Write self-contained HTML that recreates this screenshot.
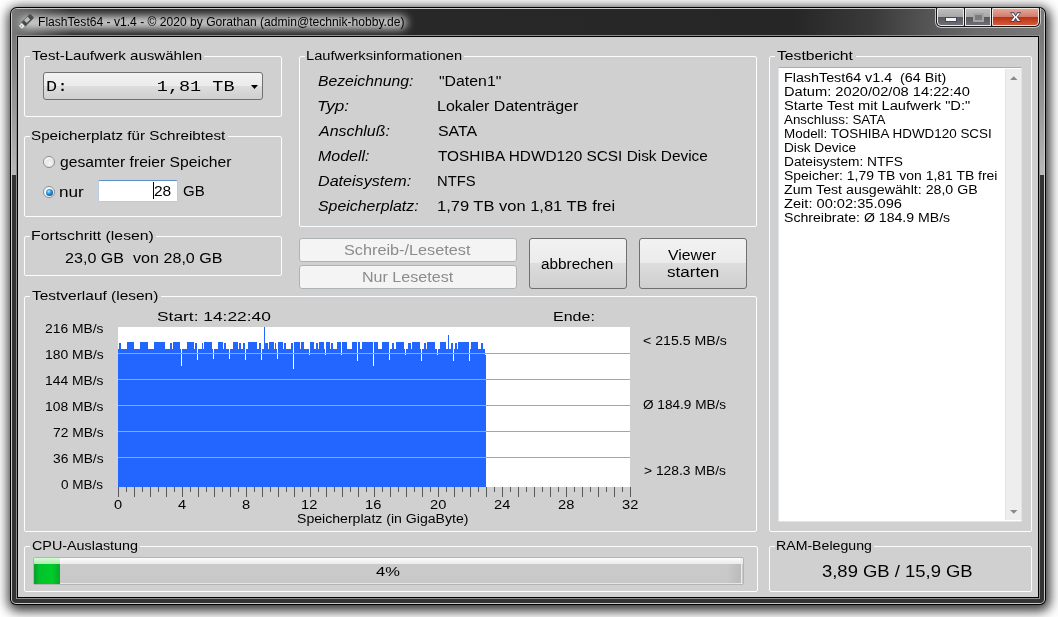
<!DOCTYPE html>
<html><head><meta charset="utf-8"><style>
html,body{margin:0;padding:0}
body{width:1058px;height:617px;position:relative;overflow:hidden;background:#fff;font-family:'Liberation Sans',sans-serif}
.t{position:absolute;line-height:20px;white-space:pre;transform-origin:0 0}
.a{position:absolute;box-sizing:border-box}
.gb{position:absolute;border:1px solid #fbfdff;border-radius:2px}
.gap{position:absolute;height:3px;background:#d0d0d0}
</style></head><body>
<div class="a" style="left:10px;top:7px;width:1036px;height:598px;border-radius:7px 7px 6px 6px;background:#000;box-shadow:1px 3px 12px 3px rgba(0,0,0,.8)"></div>
<div class="a" style="left:11px;top:8px;width:1034px;height:596px;border-radius:6px 6px 5px 5px;background:#c8c8c8"></div>
<div class="a" style="left:12px;top:9px;width:1032px;height:594px;border-radius:5px 5px 4px 4px;background:#333;overflow:hidden">
  <div class="a" style="left:0;top:0;width:1032px;height:26px;background:linear-gradient(to right,#7a7a7a 0px,#5a5a5a 22px,#2a2a2a 60px,#262626 780px,#3a3a3a 860px,#6a6a6a 960px,#7a7a7a 1032px)"></div>
  <div class="a" style="left:8px;top:7px;width:387px;height:13px;border-radius:7px;background:#d0d0d0;filter:blur(4px)"></div>
  <div class="a" style="left:0;top:26px;width:4px;height:140px;background:linear-gradient(#787878,#b8b8b8)"></div>
  <div class="a" style="left:1028px;top:26px;width:4px;height:140px;background:linear-gradient(#787878,#b8b8b8)"></div>
</div>
<div class="a" style="left:16px;top:35px;width:1024px;height:564px;border:1px solid #8c8c8c;background:#000"></div>
<div class="a" style="left:18px;top:37px;width:1020px;height:560px;background:#d0d0d0"></div>
<svg class="a" style="left:0;top:0" width="1058" height="40" viewBox="0 0 1058 40">
  <g transform="translate(26.8 21) rotate(-45)">
    <rect x="-5" y="-2.9" width="12.5" height="5.8" rx="0.8" fill="#474b4e"/>
    <rect x="-5" y="-2.9" width="12.5" height="1" fill="#5e6266"/>
    <rect x="-1.5" y="-2.5" width="5" height="4" fill="#bdbdbd"/>
    <rect x="-9" y="-2.1" width="4" height="4.2" fill="#ececec"/>
    <rect x="-8" y="-0.8" width="1.3" height="1.3" fill="#888"/>
  </g>
</svg>
<!-- caption buttons -->
<div class="a" style="left:935px;top:8px;width:106px;height:20px;border-radius:0 0 6px 6px;background:#c4c4c4"></div>
<div class="a" style="left:936px;top:7px;width:104px;height:20px;border-radius:0 0 5px 5px;background:#151515"></div>
<div class="a" style="left:937px;top:8px;width:27px;height:18px;border-radius:0 0 0 4px;border:1px solid #ececec;background:linear-gradient(#bebebe,#a6a6a6 50%,#5a5a5a 50%,#6c6d78)"></div>
<div class="a" style="left:965px;top:8px;width:26px;height:18px;border:1px solid #ececec;background:linear-gradient(#bebebe,#a6a6a6 50%,#5a5a5a 50%,#6c6d78)"></div>
<div class="a" style="left:992px;top:8px;width:47px;height:18px;border-radius:0 0 4px 0;border:1px solid #f2e6e2;background:linear-gradient(#e4a696,#d27c6a 50%,#bc2e14 50%,#d05a3a)"></div>
<div class="a" style="left:945px;top:17px;width:12px;height:5px;background:#f4f4f4;border:1px solid #3c4870"></div>
<div class="a" style="left:973px;top:13px;width:11px;height:9px;border:2px solid #a4a4a4;background:#7c7c7c"></div>
<svg class="a" style="left:1006px;top:9px" width="20" height="16" viewBox="0 0 20 16">
  <g transform="translate(9.6 8.1)">
  <path d="M-5.6 -4.8H-1.6L0 -2.1L1.6 -4.8H5.6L2.3 0L5.6 4.8H1.6L0 2.1L-1.6 4.8H-5.6L-2.3 0Z" fill="#3a4060"/>
  <path d="M-4.5 -3.8H-2.1L0 -0.7L2.1 -3.8H4.5L1.3 0L4.5 3.8H2.1L0 0.7L-2.1 3.8H-4.5L-1.3 0Z" fill="#fafafa"/>
  </g>
</svg>
<div class="gb" style="left:24px;top:56px;width:256px;height:59px"></div><div class="gap" style="left:30px;top:55px;width:174px"></div><div class="gb" style="left:24px;top:136px;width:256px;height:79px"></div><div class="gap" style="left:30px;top:135px;width:198px"></div><div class="gb" style="left:24px;top:236px;width:256px;height:38px"></div><div class="gap" style="left:30px;top:235px;width:126px"></div><div class="gb" style="left:299px;top:56px;width:456px;height:169px"></div><div class="gap" style="left:305px;top:55px;width:159px"></div><div class="gb" style="left:24px;top:296px;width:731px;height:234px"></div><div class="gap" style="left:30px;top:295px;width:131px"></div><div class="gb" style="left:24px;top:546px;width:732px;height:44px"></div><div class="gap" style="left:30px;top:545px;width:110px"></div><div class="gb" style="left:769px;top:56px;width:261px;height:474px"></div><div class="gap" style="left:775px;top:55px;width:81px"></div><div class="gb" style="left:769px;top:546px;width:261px;height:44px"></div><div class="gap" style="left:775px;top:545px;width:99px"></div>
<!-- combo -->
<div class="a" style="left:43px;top:72px;width:220px;height:28px;border:1px solid #707070;border-radius:3px;background:linear-gradient(#f2f2f2,#ebebeb 50%,#dddddd 50%,#cfcfcf)"></div>
<svg class="a" style="left:250px;top:84px" width="9" height="6"><path d="M1 1H8L4.5 5Z" fill="#000"/></svg>
<!-- radios -->
<div class="a" style="left:43px;top:156px;width:12px;height:12px;border-radius:50%;border:1px solid #8c8c8c;background:radial-gradient(circle at 60% 65%,#f6f6f6 0,#e4e6e8 45%,#ffffff 75%)"></div>
<div class="a" style="left:43px;top:186px;width:12px;height:12px;border-radius:50%;border:1px solid #8c8c8c;background:#f8f8f8"></div>
<div class="a" style="left:45.5px;top:188.5px;width:7px;height:7px;border-radius:50%;background:radial-gradient(circle at 40% 35%,#b8f0ff 0,#3aa6ea 30%,#1a78c8 55%,#0e3658 90%)"></div>
<!-- text field -->
<div class="a" style="left:98px;top:180px;width:80px;height:22px;border:1px solid #b5cde6;border-top-color:#5e8fc4;border-radius:2px;background:#fff"></div>
<div class="a" style="left:153px;top:182px;width:1px;height:17px;background:#000"></div>
<!-- buttons -->
<div class="a" style="left:299px;top:238px;width:218px;height:24px;border:1px solid #adb2b5;border-radius:3px;background:#f4f4f4"></div>
<div class="a" style="left:299px;top:265px;width:218px;height:24px;border:1px solid #adb2b5;border-radius:3px;background:#f4f4f4"></div>
<div class="a" style="left:529px;top:238px;width:98px;height:51px;border:1px solid #707070;border-radius:3px;background:linear-gradient(#f2f2f2,#ebebeb 50%,#dddddd 50%,#cfcfcf)"></div>
<div class="a" style="left:639px;top:238px;width:108px;height:51px;border:1px solid #707070;border-radius:3px;background:linear-gradient(#f2f2f2,#ebebeb 50%,#dddddd 50%,#cfcfcf)"></div>
<!-- chart -->
<svg class="a" style="left:0;top:0" width="1058" height="617" viewBox="0 0 1058 617">
  <rect x="118" y="327" width="512" height="160" fill="#fff"/>
  <path d="M118 349H119V487H118ZM119 343H121V487H119ZM121 349H127V487H121ZM127 342H134V487H127ZM134 349H140V487H134ZM140 342H148V487H140ZM148 349H154V487H148ZM154 342H165V487H154ZM165 349H170V487H165ZM170 343H172V487H170ZM172 349H173V487H172ZM173 342H180V487H173ZM180 349H181V487H180ZM181 366H182V487H181ZM182 349H187V487H182ZM187 342H194V487H187ZM194 349H195V487H194ZM195 343H197V487H195ZM197 360H198V487H197ZM198 349H202V487H198ZM202 343H203V487H202ZM203 349H204V487H203ZM204 342H212V487H204ZM212 349H213V487H212ZM213 359H214V487H213ZM214 349H218V487H214ZM218 342H223V487H218ZM223 349H224V487H223ZM224 343H226V487H224ZM226 349H229V487H226ZM229 359H230V487H229ZM230 349H233V487H230ZM233 342H238V487H233ZM238 349H239V487H238ZM239 343H241V487H239ZM241 349H243V487H241ZM243 343H245V487H243ZM245 360H246V487H245ZM246 349H248V487H246ZM248 342H257V487H248ZM257 349H259V487H257ZM259 343H261V487H259ZM261 360H262V487H261ZM262 349H264V487H262ZM264 327H265V487H264ZM265 343H268V487H265ZM268 349H269V487H268ZM269 342H274V487H269ZM274 349H275V487H274ZM275 343H276V487H275ZM276 349H277V487H276ZM277 359H278V487H277ZM278 342H283V487H278ZM283 349H284V487H283ZM284 343H286V487H284ZM286 349H291V487H286ZM291 343H293V487H291ZM293 369H294V487H293ZM294 342H300V487H294ZM300 349H301V487H300ZM301 342H304V487H301ZM304 349H309V487H304ZM309 355H310V487H309ZM310 342H314V487H310ZM314 349H316V487H314ZM316 343H318V487H316ZM318 349H319V487H318ZM319 342H324V487H319ZM324 349H325V487H324ZM325 355H326V487H325ZM326 342H330V487H326ZM330 349H331V487H330ZM331 343H333V487H331ZM333 349H337V487H333ZM337 342H341V487H337ZM341 355H342V487H341ZM342 342H347V487H342ZM347 349H352V487H347ZM352 342H357V487H352ZM357 361H358V487H357ZM358 342H360V487H358ZM360 349H362V487H360ZM362 342H373V487H362ZM373 366H374V487H373ZM374 342H378V487H374ZM378 349H382V487H378ZM382 342H389V487H382ZM389 360H390V487H389ZM390 349H392V487H390ZM392 343H394V487H392ZM394 349H396V487H394ZM396 342H404V487H396ZM404 349H405V487H404ZM405 355H406V487H405ZM406 349H408V487H406ZM408 343H411V487H408ZM411 349H412V487H411ZM412 342H420V487H412ZM420 349H421V487H420ZM421 361H422V487H421ZM422 349H424V487H422ZM424 343H426V487H424ZM426 349H427V487H426ZM427 342H435V487H427ZM435 349H437V487H435ZM437 355H438V487H437ZM438 349H440V487H438ZM440 342H446V487H440ZM446 349H448V487H446ZM448 335H449V487H448ZM449 349H451V487H449ZM451 343H453V487H451ZM453 361H454V487H453ZM454 349H455V487H454ZM455 343H457V487H455ZM457 349H458V487H457ZM458 342H469V487H458ZM469 361H470V487H469ZM470 349H471V487H470ZM471 342H478V487H471ZM478 349H481V487H478ZM481 343H483V487H481ZM483 349H485V487H483ZM485 355H486V487H485Z" fill="#2266ff"/>
  <path d="M118 353.5H630M118 379.5H630M118 405.5H630M118 431.5H630M118 457.5H630" stroke="#a6a6a6" stroke-width="1"/>
  <path d="M118.5 487V497M126.5 487V492M134.5 487V497M142.5 487V492M150.5 487V497M158.5 487V492M166.5 487V497M174.5 487V492M182.5 487V497M190.5 487V492M198.5 487V497M206.5 487V492M214.5 487V497M222.5 487V492M230.5 487V497M238.5 487V492M246.5 487V497M254.5 487V492M262.5 487V497M270.5 487V492M278.5 487V497M286.5 487V492M294.5 487V497M302.5 487V492M310.5 487V497M318.5 487V492M326.5 487V497M334.5 487V492M342.5 487V497M350.5 487V492M358.5 487V497M366.5 487V492M374.5 487V497M382.5 487V492M390.5 487V497M398.5 487V492M406.5 487V497M414.5 487V492M422.5 487V497M430.5 487V492M438.5 487V497M446.5 487V492M454.5 487V497M462.5 487V492M470.5 487V497M478.5 487V492M486.5 487V497M494.5 487V492M502.5 487V497M510.5 487V492M518.5 487V497M526.5 487V492M534.5 487V497M542.5 487V492M550.5 487V497M558.5 487V492M566.5 487V497M574.5 487V492M582.5 487V497M590.5 487V492M598.5 487V497M606.5 487V492M614.5 487V497M622.5 487V492M630.5 487V497" stroke="#5a5a5a" stroke-width="1"/>
</svg>
<!-- progress -->
<div class="a" style="left:33px;top:557px;width:711px;height:28px;border:1px solid #b4b4b4;border-radius:2px;background:linear-gradient(#fcfcfc,#ebebeb 6px,#cacaca 6px,#c8c8c8 25px,#e6e6e6 25px)"></div>
<div class="a" style="left:726px;top:564px;width:15px;height:19px;background:linear-gradient(to right,rgba(0,0,0,0),rgba(0,0,0,.07))"></div>
<div class="a" style="left:741px;top:558px;width:1px;height:26px;background:#ececec"></div>
<div class="a" style="left:34px;top:558px;width:26px;height:6px;background:linear-gradient(#d2fcd2,#b0eab0)"></div>
<div class="a" style="left:34px;top:564px;width:26px;height:20px;background:linear-gradient(to right,#0a9e2a,#00c42a 22%,#00cc2a 70%,#08a82a)"></div>
<!-- memo -->
<div class="a" style="left:778px;top:67px;width:244px;height:455px;border:1px solid #dfe4ea;border-top-color:#a8acb0;background:#fff"></div>
<div class="a" style="left:1005px;top:69px;width:16px;height:451px;background:#eeeeee;border-left:1px solid #e4e4e4"></div>
<svg class="a" style="left:1008px;top:74px" width="12" height="8"><path d="M2 6H9.5L5.75 2.2Z" fill="#8a8a8a"/></svg>
<svg class="a" style="left:1008px;top:508px" width="12" height="8"><path d="M2 2H9.5L5.75 5.8Z" fill="#8a8a8a"/></svg>
<div class="t" style="left:38.40px;top:12.00px;font-family:'Liberation Sans';font-size:12px;color:#000;transform:scaleX(1.0077)">FlashTest64 - v1.4 - © 2020 by Gorathan (admin@technik-hobby.de)</div><div class="t" style="left:32.00px;top:46.00px;font-family:'Liberation Sans';font-size:13px;color:#000;transform:scaleX(1.1596)">Test-Laufwerk auswählen</div><div class="t" style="left:31.33px;top:126.00px;font-family:'Liberation Sans';font-size:13px;color:#000;transform:scaleX(1.1691)">Speicherplatz für Schreibtest</div><div class="t" style="left:31.40px;top:226.00px;font-family:'Liberation Sans';font-size:13px;color:#000;transform:scaleX(1.2151)">Fortschritt (lesen)</div><div class="t" style="left:31.90px;top:286.00px;font-family:'Liberation Sans';font-size:13px;color:#000;transform:scaleX(1.1897)">Testverlauf (lesen)</div><div class="t" style="left:306.03px;top:46.00px;font-family:'Liberation Sans';font-size:12.5px;color:#000;transform:scaleX(1.1763)">Laufwerksinformationen</div><div class="t" style="left:32.20px;top:536.00px;font-family:'Liberation Sans';font-size:13px;color:#000;transform:scaleX(1.1032)">CPU-Auslastung</div><div class="t" style="left:776.80px;top:46.00px;font-family:'Liberation Sans';font-size:13px;color:#000;transform:scaleX(1.2080)">Testbericht</div><div class="t" style="left:775.73px;top:536.00px;font-family:'Liberation Sans';font-size:13px;color:#000;transform:scaleX(1.0874)">RAM-Belegung</div><div class="t" style="left:46.48px;top:78.00px;font-family:'Liberation Mono';font-size:15px;color:#000;transform:scaleX(1.2316)">D:        1,81 TB</div><div class="t" style="left:59.70px;top:152.00px;font-family:'Liberation Sans';font-size:14.5px;color:#000;transform:scaleX(1.0792)">gesamter freier Speicher</div><div class="t" style="left:59.35px;top:182.00px;font-family:'Liberation Sans';font-size:14.5px;color:#000;transform:scaleX(1.1844)">nur</div><div class="t" style="left:153.80px;top:181.00px;font-family:'Liberation Sans';font-size:14px;color:#000;transform:scaleX(1.1072)">28</div><div class="t" style="left:182.70px;top:181.00px;font-family:'Liberation Sans';font-size:14px;color:#000;transform:scaleX(1.0724)">GB</div><div class="t" style="left:65.20px;top:248.00px;font-family:'Liberation Sans';font-size:14px;color:#000;transform:scaleX(1.1504)">23,0 GB  von 28,0 GB</div><div class="t" style="left:318.20px;top:71.00px;font-family:'Liberation Sans';font-style:italic;font-size:14px;color:#000;transform:scaleX(1.1236)">Bezeichnung:</div><div class="t" style="left:316.99px;top:96.00px;font-family:'Liberation Sans';font-style:italic;font-size:14px;color:#000;transform:scaleX(1.2242)">Typ:</div><div class="t" style="left:319.31px;top:121.00px;font-family:'Liberation Sans';font-style:italic;font-size:14px;color:#000;transform:scaleX(1.1384)">Anschluß:</div><div class="t" style="left:318.20px;top:146.00px;font-family:'Liberation Sans';font-style:italic;font-size:14px;color:#000;transform:scaleX(1.1401)">Modell:</div><div class="t" style="left:318.20px;top:171.00px;font-family:'Liberation Sans';font-style:italic;font-size:14px;color:#000;transform:scaleX(1.1507)">Dateisystem:</div><div class="t" style="left:317.80px;top:196.00px;font-family:'Liberation Sans';font-style:italic;font-size:14px;color:#000;transform:scaleX(1.1341)">Speicherplatz:</div><div class="t" style="left:438.90px;top:71.00px;font-family:'Liberation Sans';font-size:14px;color:#000;transform:scaleX(1.1311)">&quot;Daten1&quot;</div><div class="t" style="left:436.86px;top:96.00px;font-family:'Liberation Sans';font-size:14px;color:#000;transform:scaleX(1.1415)">Lokaler Datenträger</div><div class="t" style="left:437.91px;top:121.00px;font-family:'Liberation Sans';font-size:14px;color:#000;transform:scaleX(1.1359)">SATA</div><div class="t" style="left:438.00px;top:146.00px;font-family:'Liberation Sans';font-size:14px;color:#000;transform:scaleX(1.0988)">TOSHIBA HDWD120 SCSI Disk Device</div><div class="t" style="left:436.96px;top:171.00px;font-family:'Liberation Sans';font-size:14px;color:#000;transform:scaleX(1.0545)">NTFS</div><div class="t" style="left:436.83px;top:196.00px;font-family:'Liberation Sans';font-size:14px;color:#000;transform:scaleX(1.1774)">1,79 TB von 1,81 TB frei</div><div class="t" style="left:343.85px;top:240.00px;font-family:'Liberation Sans';font-size:14px;color:#8c8c8c;transform:scaleX(1.1602)">Schreib-/Lesetest</div><div class="t" style="left:361.86px;top:267.00px;font-family:'Liberation Sans';font-size:14px;color:#8c8c8c;transform:scaleX(1.1482)">Nur Lesetest</div><div class="t" style="left:541.00px;top:254.00px;font-family:'Liberation Sans';font-size:14px;color:#000;transform:scaleX(1.0940)">abbrechen</div><div class="t" style="left:668.00px;top:245.00px;font-family:'Liberation Sans';font-size:14px;color:#000;transform:scaleX(1.1285)">Viewer</div><div class="t" style="left:667.00px;top:262.00px;font-family:'Liberation Sans';font-size:14px;color:#000;transform:scaleX(1.2193)">starten</div><div class="t" style="left:157.01px;top:307.00px;font-family:'Liberation Sans';font-size:12.5px;color:#000;transform:scaleX(1.3889)">Start: 14:22:40</div><div class="t" style="left:552.75px;top:307.00px;font-family:'Liberation Sans';font-size:12.5px;color:#000;transform:scaleX(1.2804)">Ende:</div><div class="t" style="left:45.30px;top:319.00px;font-family:'Liberation Sans';font-size:12.5px;color:#000;transform:scaleX(1.1080)">216 MB/s</div><div class="t" style="left:44.91px;top:345.00px;font-family:'Liberation Sans';font-size:12.5px;color:#000;transform:scaleX(1.1119)">180 MB/s</div><div class="t" style="left:45.12px;top:371.00px;font-family:'Liberation Sans';font-size:12.5px;color:#000;transform:scaleX(1.1079)">144 MB/s</div><div class="t" style="left:45.12px;top:397.00px;font-family:'Liberation Sans';font-size:12.5px;color:#000;transform:scaleX(1.1079)">108 MB/s</div><div class="t" style="left:53.30px;top:423.00px;font-family:'Liberation Sans';font-size:12.5px;color:#000;transform:scaleX(1.1033)">72 MB/s</div><div class="t" style="left:53.30px;top:449.00px;font-family:'Liberation Sans';font-size:12.5px;color:#000;transform:scaleX(1.1033)">36 MB/s</div><div class="t" style="left:60.80px;top:475.00px;font-family:'Liberation Sans';font-size:12.5px;color:#000;transform:scaleX(1.0824)">0 MB/s</div><div class="t" style="left:643.40px;top:331.00px;font-family:'Liberation Sans';font-size:12.5px;color:#000;transform:scaleX(1.1313)">&lt; 215.5 MB/s</div><div class="t" style="left:643.40px;top:395.00px;font-family:'Liberation Sans';font-size:12.5px;color:#000;transform:scaleX(1.0881)">Ø 184.9 MB/s</div><div class="t" style="left:644.00px;top:461.00px;font-family:'Liberation Sans';font-size:12.5px;color:#000;transform:scaleX(1.1068)">&gt; 128.3 MB/s</div><div class="t" style="left:296.88px;top:508.50px;font-family:'Liberation Sans';font-size:12.5px;color:#000;transform:scaleX(1.1272)">Speicherplatz (in GigaByte)</div><div class="t" style="left:375.90px;top:562.00px;font-family:'Liberation Sans';font-size:13.5px;color:#000;transform:scaleX(1.2264)">4%</div><div class="t" style="left:822.39px;top:561.00px;font-family:'Liberation Sans';font-size:16.5px;color:#000;transform:scaleX(1.1173)">3,89 GB / 15,9 GB</div><div class="t" style="left:784.20px;top:68.00px;font-family:'Liberation Sans';font-size:12.5px;color:#000;transform:scaleX(1.1443)">FlashTest64 v1.4  (64 Bit)</div><div class="t" style="left:784.20px;top:82.00px;font-family:'Liberation Sans';font-size:12.5px;color:#000;transform:scaleX(1.1733)">Datum: 2020/02/08 14:22:40</div><div class="t" style="left:784.20px;top:96.00px;font-family:'Liberation Sans';font-size:12.5px;color:#000;transform:scaleX(1.1734)">Starte Test mit Laufwerk &quot;D:&quot;</div><div class="t" style="left:784.20px;top:110.00px;font-family:'Liberation Sans';font-size:12.5px;color:#000;transform:scaleX(1.0705)">Anschluss: SATA</div><div class="t" style="left:784.20px;top:124.00px;font-family:'Liberation Sans';font-size:12.5px;color:#000;transform:scaleX(1.0745)">Modell: TOSHIBA HDWD120 SCSI</div><div class="t" style="left:784.20px;top:138.00px;font-family:'Liberation Sans';font-size:12.5px;color:#000;transform:scaleX(1.0923)">Disk Device</div><div class="t" style="left:784.20px;top:152.00px;font-family:'Liberation Sans';font-size:12.5px;color:#000;transform:scaleX(1.0972)">Dateisystem: NTFS</div><div class="t" style="left:784.20px;top:166.00px;font-family:'Liberation Sans';font-size:12.5px;color:#000;transform:scaleX(1.1158)">Speicher: 1,79 TB von 1,81 TB frei</div><div class="t" style="left:784.20px;top:180.00px;font-family:'Liberation Sans';font-size:12.5px;color:#000;transform:scaleX(1.1347)">Zum Test ausgewählt: 28,0 GB</div><div class="t" style="left:784.20px;top:194.00px;font-family:'Liberation Sans';font-size:12.5px;color:#000;transform:scaleX(1.1703)">Zeit: 00:02:35.096</div><div class="t" style="left:784.20px;top:208.00px;font-family:'Liberation Sans';font-size:12.5px;color:#000;transform:scaleX(1.1281)">Schreibrate: Ø 184.9 MB/s</div><div class="t" style="left:113.73px;top:495.00px;font-family:'Liberation Sans';font-size:12px;color:#000;transform:scaleX(1.2200)">0</div><div class="t" style="left:177.73px;top:495.00px;font-family:'Liberation Sans';font-size:12px;color:#000;transform:scaleX(1.2200)">4</div><div class="t" style="left:241.73px;top:495.00px;font-family:'Liberation Sans';font-size:12px;color:#000;transform:scaleX(1.2200)">8</div><div class="t" style="left:301.46px;top:495.00px;font-family:'Liberation Sans';font-size:12px;color:#000;transform:scaleX(1.2200)">12</div><div class="t" style="left:365.46px;top:495.00px;font-family:'Liberation Sans';font-size:12px;color:#000;transform:scaleX(1.2200)">16</div><div class="t" style="left:430.07px;top:495.00px;font-family:'Liberation Sans';font-size:12px;color:#000;transform:scaleX(1.2200)">20</div><div class="t" style="left:494.07px;top:495.00px;font-family:'Liberation Sans';font-size:12px;color:#000;transform:scaleX(1.2200)">24</div><div class="t" style="left:558.07px;top:495.00px;font-family:'Liberation Sans';font-size:12px;color:#000;transform:scaleX(1.2200)">28</div><div class="t" style="left:622.07px;top:495.00px;font-family:'Liberation Sans';font-size:12px;color:#000;transform:scaleX(1.2200)">32</div>
</body></html>
